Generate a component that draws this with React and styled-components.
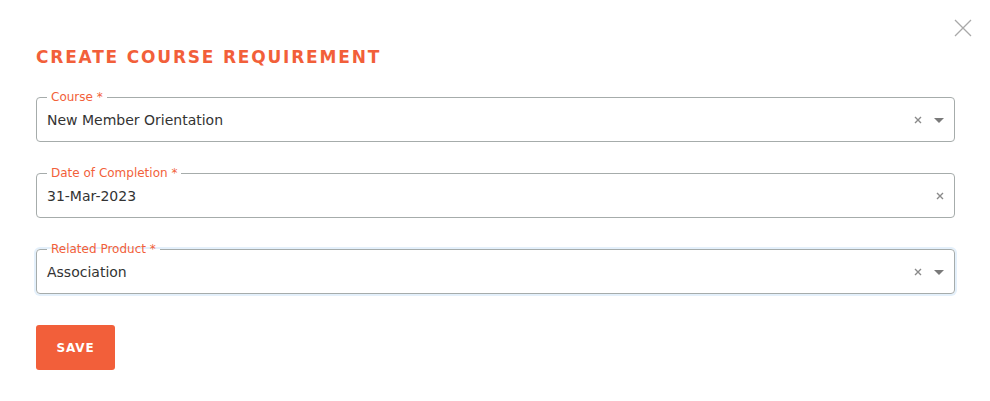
import styled, { createGlobalStyle } from "styled-components";

const Global = createGlobalStyle`
    html, body {
        margin: 0;
        padding: 0;
        background: #fff;
        font-family: "DejaVu Sans", "Open Sans", sans-serif;
    }
`

const colores = {
    naranja: "#f25f3a",
    borde: "#a6acab",
    texto: "#333",
    icono: "#8a8a8a",
}

const Modal = styled.div`
    position: relative;
    width: 990px;
    height: 401px;
    box-sizing: border-box;
    padding: 46px 35px 0 36px;
    display: flex;
    flex-direction: column;
`
const Cerrar = styled.button`
    position: absolute;
    top: 18px;
    right: 17px;
    width: 20px;
    height: 20px;
    padding: 0;
    border: none;
    background: none;
    cursor: pointer;

    svg {
        display: block;
    }
`
const Titulo = styled.h2`
    margin: 0 0 22px;
    font-size: 17px;
    line-height: 22px;
    font-weight: 800;
    letter-spacing: 1.8px;
    color: ${colores.naranja};
    text-transform: uppercase;
`
const Formulario = styled.form`
    display: flex;
    flex-direction: column;
    gap: 24px;
`
const Campo = styled.fieldset`
    margin: 0;
    padding: 0 10px 5px 10px;
    border: 1px solid ${colores.borde};
    border-radius: 4px;
    box-shadow: ${({ $foco }) => ($foco ? "0 0 0 2px #e4f0fb" : "none")};

    legend {
        margin-left: 0;
        padding: 0 4px;
        font-size: 12px;
        line-height: 14px;
        color: ${colores.naranja};
    }
`
const Fila = styled.div`
    height: 32px;
    display: flex;
    align-items: center;
    gap: 12px;
`
const Valor = styled.span`
    flex: 1;
    font-size: 14px;
    color: ${colores.texto};
`
const Iconos = styled.div`
    display: flex;
    align-items: center;
    gap: 12px;
    color: ${colores.icono};
`
const Boton = styled.button`
    margin-top: 31px;
    align-self: flex-start;
    width: 79px;
    height: 45px;
    border: none;
    border-radius: 3px;
    background: ${colores.naranja};
    color: #fff;
    font-family: inherit;
    font-size: 12px;
    font-weight: 800;
    letter-spacing: 0.8px;
    cursor: pointer;
`

const Limpiar = () => (
    <svg width="8" height="8" viewBox="0 0 8 8">
        <path d="M1 1L7 7M7 1L1 7" stroke="#8a8a8a" strokeWidth="1.4" />
    </svg>
)

const Flecha = () => (
    <svg width="10" height="5" viewBox="0 0 10 5">
        <path d="M0 0H10L5 5Z" fill="#7a7a7a" />
    </svg>
)

const campos = [
    { etiqueta: "Course *", valor: "New Member Orientation", flecha: true },
    { etiqueta: "Date of Completion *", valor: "31-Mar-2023", flecha: false },
    { etiqueta: "Related Product *", valor: "Association", flecha: true, foco: true },
]

const App = () => {
    return (
        <>
            <Global />
            <Modal>
                <Cerrar aria-label="Cerrar">
                    <svg width="20" height="20" viewBox="0 0 20 20">
                        <path d="M2 2L18 18M18 2L2 18" stroke="#a9a9a9" strokeWidth="1.3" />
                    </svg>
                </Cerrar>
                <Titulo>Create Course Requirement</Titulo>
                <Formulario>
                    {campos.map((campo) => (
                        <Campo key={campo.etiqueta} $foco={campo.foco}>
                            <legend>{campo.etiqueta}</legend>
                            <Fila>
                                <Valor>{campo.valor}</Valor>
                                <Iconos>
                                    <Limpiar />
                                    {campo.flecha && <Flecha />}
                                </Iconos>
                            </Fila>
                        </Campo>
                    ))}
                </Formulario>
                <Boton>SAVE</Boton>
            </Modal>
        </>
    )
}

export default App;
